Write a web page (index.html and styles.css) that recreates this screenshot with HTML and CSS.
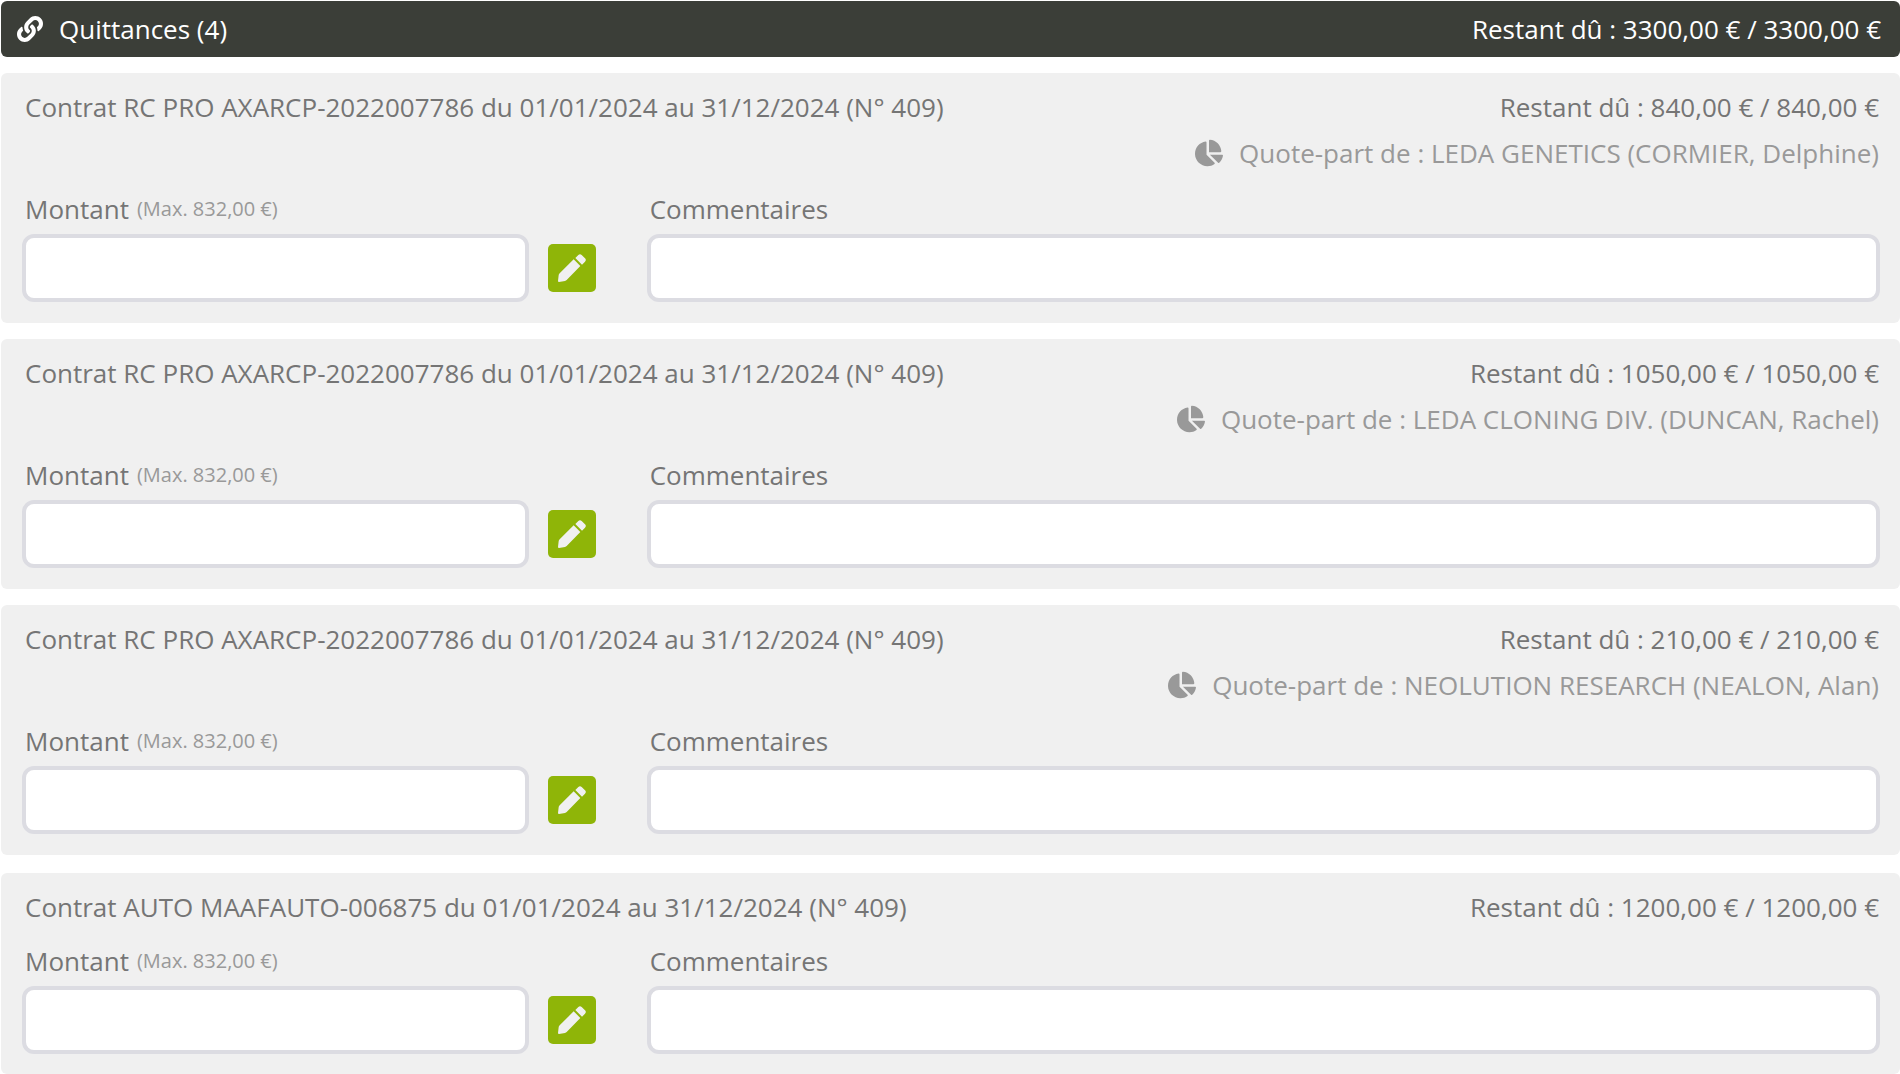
FILE: index.html
```html
<!DOCTYPE html>
<html lang="fr">
<head>
<meta charset="utf-8">
<meta name="viewport" content="width=device-width, initial-scale=1">
<title>Quittances</title>
<link rel="stylesheet" href="styles.css">
</head>
<body>
<svg class="sprite" aria-hidden="true">
  <symbol id="icon-link" viewBox="0 0 512 512"><path d="M326.612 185.391c59.747 59.809 58.927 155.698.36 214.59-.11.12-.24.25-.36.37l-67.2 67.2c-59.27 59.27-155.699 59.262-214.96 0-59.27-59.26-59.27-155.7 0-214.96l37.106-37.106c9.84-9.84 26.786-3.3 27.294 10.606.648 17.722 3.826 35.527 9.69 52.721 1.986 5.822.567 12.262-3.783 16.612l-13.087 13.087c-28.026 28.026-28.905 73.66-1.155 101.96 28.024 28.579 74.086 28.749 102.325.51l67.2-67.19c28.191-28.191 28.073-73.757 0-101.83-3.701-3.694-7.429-6.564-10.341-8.569a16.037 16.037 0 0 1-6.947-12.606c-.396-10.567 3.348-21.456 11.698-29.806l21.054-21.055c5.521-5.521 14.182-6.199 20.584-1.731a152.482 152.482 0 0 1 20.522 17.197zM467.547 44.449c-59.261-59.262-155.69-59.27-214.96 0l-67.2 67.2c-.12.12-.25.25-.36.37-58.566 58.892-59.387 154.781.36 214.59a152.454 152.454 0 0 0 20.521 17.196c6.402 4.468 15.064 3.789 20.584-1.731l21.054-21.055c8.35-8.35 12.094-19.239 11.698-29.806a16.037 16.037 0 0 0-6.947-12.606c-2.912-2.005-6.64-4.875-10.341-8.569-28.073-28.073-28.191-73.639 0-101.83l67.2-67.19c28.239-28.239 74.3-28.069 102.325.51 27.75 28.3 26.872 73.934-1.155 101.96l-13.087 13.087c-4.35 4.35-5.769 10.79-3.783 16.612 5.864 17.194 9.042 34.999 9.69 52.721.509 13.906 17.454 20.446 27.294 10.606l37.106-37.106c59.271-59.259 59.271-155.699.001-214.959z"/></symbol>
  <symbol id="icon-pie" viewBox="0 0 544 512"><path d="M527.79 288H290.5l158.03 158.03c6.04 6.04 15.98 6.53 22.19.68 38.7-36.46 65.32-85.61 73.13-140.86 1.34-9.46-6.51-17.85-16.06-17.85zm-15.83-64.8C503.72 103.74 408.26 8.28 288.8.04 279.68-.59 272 7.1 272 16.24V240h223.77c9.14 0 16.82-7.68 16.19-16.8zM224 288V50.71c0-9.55-8.39-17.4-17.84-16.06C86.99 51.49-4.1 155.6.14 280.37 4.5 408.51 114.83 513.59 243.03 511.98c50.4-.63 96.97-16.87 135.26-44.03 7.9-5.6 8.42-17.23 1.57-24.08L224 288z"/></symbol>
  <symbol id="icon-pencil" viewBox="0 0 84 84"><path d="M47 16 67 36 26 78Q24 80 21 81L3 84Q0 84 0 81L2 64Q2 61 5 58ZM52 12 61 3Q66-2 71 3L81 13Q86 18 81 23L72 32Z"/></symbol>
</svg>

<main class="page">
  <header class="summary">
    <svg class="icon" aria-hidden="true"><use href="#icon-link"/></svg>
    <h1 class="summary-title">Quittances (4)</h1>
    <span>Restant dû : 3300,00 € / 3300,00 €</span>
  </header>

  <section class="card">
    <div class="card-head">
      <h2 class="card-title">Contrat RC PRO AXARCP-2022007786 du 01/01/2024 au 31/12/2024 (N° 409)</h2>
      <span>Restant dû : 840,00 € / 840,00 €</span>
    </div>
    <p class="share"><svg class="icon icon-share" aria-hidden="true"><use href="#icon-pie"/></svg>Quote-part de : LEDA GENETICS (CORMIER, Delphine)</p>
    <div class="fields">
      <div class="field">
        <label class="label" for="amount-1">Montant <small class="hint">(Max. 832,00 €)</small></label>
        <div class="control"><input class="input" id="amount-1" type="text"><button class="edit" type="button" aria-label="Modifier"><svg class="pencil" aria-hidden="true"><use href="#icon-pencil"/></svg></button></div>
      </div>
      <div class="field">
        <label class="label" for="comment-1">Commentaires</label>
        <input class="input" id="comment-1" type="text">
      </div>
    </div>
  </section>

  <section class="card">
    <div class="card-head">
      <h2 class="card-title">Contrat RC PRO AXARCP-2022007786 du 01/01/2024 au 31/12/2024 (N° 409)</h2>
      <span>Restant dû : 1050,00 € / 1050,00 €</span>
    </div>
    <p class="share"><svg class="icon icon-share" aria-hidden="true"><use href="#icon-pie"/></svg>Quote-part de : LEDA CLONING DIV. (DUNCAN, Rachel)</p>
    <div class="fields">
      <div class="field">
        <label class="label" for="amount-2">Montant <small class="hint">(Max. 832,00 €)</small></label>
        <div class="control"><input class="input" id="amount-2" type="text"><button class="edit" type="button" aria-label="Modifier"><svg class="pencil" aria-hidden="true"><use href="#icon-pencil"/></svg></button></div>
      </div>
      <div class="field">
        <label class="label" for="comment-2">Commentaires</label>
        <input class="input" id="comment-2" type="text">
      </div>
    </div>
  </section>

  <section class="card">
    <div class="card-head">
      <h2 class="card-title">Contrat RC PRO AXARCP-2022007786 du 01/01/2024 au 31/12/2024 (N° 409)</h2>
      <span>Restant dû : 210,00 € / 210,00 €</span>
    </div>
    <p class="share"><svg class="icon icon-share" aria-hidden="true"><use href="#icon-pie"/></svg>Quote-part de : NEOLUTION RESEARCH (NEALON, Alan)</p>
    <div class="fields">
      <div class="field">
        <label class="label" for="amount-3">Montant <small class="hint">(Max. 832,00 €)</small></label>
        <div class="control"><input class="input" id="amount-3" type="text"><button class="edit" type="button" aria-label="Modifier"><svg class="pencil" aria-hidden="true"><use href="#icon-pencil"/></svg></button></div>
      </div>
      <div class="field">
        <label class="label" for="comment-3">Commentaires</label>
        <input class="input" id="comment-3" type="text">
      </div>
    </div>
  </section>

  <section class="card card-single">
    <div class="card-head">
      <h2 class="card-title">Contrat AUTO MAAFAUTO-006875 du 01/01/2024 au 31/12/2024 (N° 409)</h2>
      <span>Restant dû : 1200,00 € / 1200,00 €</span>
    </div>
    <div class="fields">
      <div class="field">
        <label class="label" for="amount-4">Montant <small class="hint">(Max. 832,00 €)</small></label>
        <div class="control"><input class="input" id="amount-4" type="text"><button class="edit" type="button" aria-label="Modifier"><svg class="pencil" aria-hidden="true"><use href="#icon-pencil"/></svg></button></div>
      </div>
      <div class="field">
        <label class="label" for="comment-4">Commentaires</label>
        <input class="input" id="comment-4" type="text">
      </div>
    </div>
  </section>
</main>
</body>
</html>
```
FILE: styles.css
```css
*,
*::before,
*::after {
  box-sizing: border-box;
}

body {
  margin: 0;
  background: #fff;
  color: #757575;
  font: 400 26px/36px "Open Sans", "Noto Sans", sans-serif;
}

h1,
h2,
p {
  margin: 0;
  font-size: inherit;
  font-weight: inherit;
}

.sprite {
  display: none;
}

.page {
  display: flex;
  flex-direction: column;
  gap: 16px;
  padding: 1px 0 0 1px;
}

.icon {
  flex: none;
  width: 26px;
  height: 26px;
  fill: currentColor;
}

.icon-share {
  width: 28px;
  height: 28px;
}

.summary {
  display: flex;
  align-items: center;
  gap: 16px;
  padding: 10px 19px 10px 16px;
  border-radius: 6px;
  background: #3b3e38;
  color: #fff;
}

.summary-title {
  flex: 1;
}

.card {
  padding: 16px 20px 21px 21px;
  border-radius: 6px;
  background: #f0f0f0;
}

.card-single {
  margin-top: 2px;
  padding-bottom: 20px;
}

.card-head {
  display: flex;
  justify-content: space-between;
  gap: 24px;
  padding: 0 1px 0 3px;
}

.share {
  display: flex;
  align-items: center;
  justify-content: flex-end;
  gap: 16px;
  margin-top: 10px;
  padding-right: 1px;
  color: #999;
}

.fields {
  display: grid;
  grid-template-columns: 20fr 43fr;
  gap: 51px;
  margin-top: 20px;
}

.card-single .fields {
  margin-top: 18px;
}

.field {
  display: flex;
  flex-direction: column;
  gap: 7px;
  min-width: 0;
}

.label {
  display: flex;
  align-items: center;
  gap: 8px;
  padding-left: 3px;
}

.hint {
  color: #999;
  font-size: 20px;
}

.control {
  display: flex;
  align-items: center;
  gap: 19px;
}

.input {
  width: 100%;
  min-width: 0;
  height: 68px;
  padding: 0 16px;
  border: 4px solid #dcdce2;
  border-radius: 12px;
  background: #fff;
  color: inherit;
  font: inherit;
}

.edit {
  display: grid;
  flex: none;
  place-items: center;
  width: 48px;
  height: 48px;
  padding: 0;
  border: 0;
  border-radius: 5px;
  background: #8fb508;
  color: #f0f0f0;
  cursor: pointer;
}

.pencil {
  width: 28px;
  height: 28px;
  fill: currentColor;
}
```
